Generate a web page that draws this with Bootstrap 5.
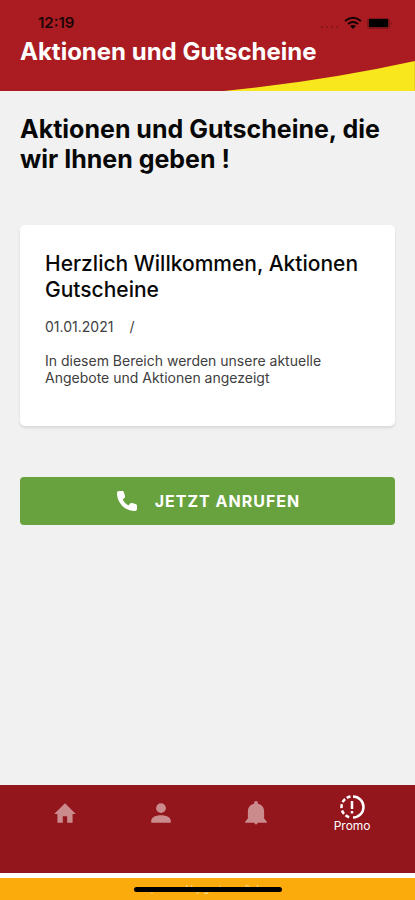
<!DOCTYPE html>
<html lang="de">
<head>
<meta charset="utf-8">
<meta name="viewport" content="width=device-width, initial-scale=1">
<title>Aktionen und Gutscheine</title>
<link href="https://cdn.jsdelivr.net/npm/bootstrap@5.3.0/dist/css/bootstrap.min.css" rel="stylesheet">
<style>
body { font-family: Inter, "Liberation Sans", sans-serif; background: #f1f1f1; color: #080808; }
.app-header { background: #aa1c22; height: 91px; }
.swoosh { right: 0; bottom: 0; width: 46%; height: 30px; }
.status { padding: 14px 20px 0 38px; height: 37px; color: #1c0506; }
.clock { font-size: 15px; line-height: 18px; font-weight: 600; }
.page-title { font-size: 24px; line-height: 30px; font-weight: 700; }
.gutter { padding-left: 20px; padding-right: 20px; }
.lead-title { font-size: 25px; line-height: 30px; font-weight: 700; margin: 23px 0 51px; }
.promo-card { border-radius: 5px; padding: 26px 25px 40px; box-shadow: 0 2px 3px rgba(0,0,0,.1); }
.promo-card h3 { font-size: 21px; line-height: 26px; font-weight: 500; margin-bottom: 15px; }
.meta { font-size: 14px; line-height: 18px; color: #404040; margin-bottom: 16px; }
.copy { font-size: 14px; line-height: 17px; color: #404040; }
.btn-call { --bs-btn-bg: #68a23e; --bs-btn-color: #fff; --bs-btn-hover-bg: #5b9135; --bs-btn-hover-color: #fff; height: 48px; border-radius: 4px; margin-top: 51px; font-size: 16px; font-weight: 700; letter-spacing: 1px; gap: 16px; }
.tabs { background: #92161c; height: 88px; padding: 0 15px 0 17px; }
.tabs a { color: #cb8b8d; height: 56px; font-size: 12px; line-height: 12px; }
.tabs a.active { color: #fff; }
.credit { background: #fbab0b; border-top: 5px solid #fff; height: 27px; padding-top: 5px; font-size: 9px; line-height: 12px; }
.credit a { color: #ffe3a4; }
.home-bar { left: 50%; top: 9px; width: 148px; height: 5px; border-radius: 3px; transform: translateX(-50%); }
</style>
<script src="https://cdn.jsdelivr.net/npm/bootstrap@5.3.0/dist/js/bootstrap.bundle.min.js"></script>
</head>
<body class="d-flex flex-column min-vh-100">
<header class="app-header position-relative">
  <svg class="swoosh position-absolute" viewBox="0 0 190 30" preserveAspectRatio="none" aria-hidden="true"><path d="M0 30Q100 20 190 0V30Z" fill="#f8e71c"/></svg>
  <div class="status d-flex justify-content-between position-relative">
    <span class="clock">12:19</span>
    <svg width="76" height="18" viewBox="0 0 76 18" aria-hidden="true">
      <g fill="#80151a"><circle cx="3" cy="13" r="1"/><circle cx="8" cy="13" r="1"/><circle cx="13" cy="13" r="1"/><circle cx="18" cy="13" r="1"/></g>
      <g fill="none" stroke="#120304" stroke-width="2"><path d="M26 7Q34 .5 42 7M29 10Q34 6 39 10"/></g><path d="M31 12Q34 10 37 12L34 15Z" fill="#120304"/>
      <rect x="48" y="4" width="23" height="11" rx="3" fill="#80151a"/><rect x="50" y="5" width="19" height="8" rx="1" fill="#000"/><path d="M72 7q2 2 0 4z" fill="#80151a"/>
    </svg>
  </div>
  <h1 class="page-title gutter text-white mb-0 position-relative">Aktionen und Gutscheine</h1>
</header>
<main class="gutter flex-grow-1">
  <h2 class="lead-title">Aktionen und Gutscheine, die wir Ihnen geben !</h2>
  <article class="promo-card bg-white">
    <h3>Herzlich Willkommen, Aktionen Gutscheine</h3>
    <div class="meta d-flex gap-3"><time datetime="2021-01-01">01.01.2021</time><span>/</span></div>
    <p class="copy mb-0">In diesem Bereich werden unsere aktuelle Angebote und Aktionen angezeigt</p>
  </article>
  <button type="button" class="btn btn-call w-100 border-0 d-flex align-items-center justify-content-center">
    <svg width="24" height="24" viewBox="0 0 24 24" fill="currentColor" aria-hidden="true"><path d="M4 2h3c1 0 1.700.5 2 1.400l1 3.600c.2.800 0 1.500-.6 2L7.600 10.500c1.400 2.600 3.300 4.500 5.900 5.900L15 14.600c.5-.6 1.200-.8 2-.6l3.600 1c.9.300 1.400 1 1.400 2v3c0 1.200-.8 2-2 2C10 22 2 14 2 4c0-1.200.8-2 2-2Z"/></svg>
    <span>JETZT ANRUFEN</span>
  </button>
</main>
<nav class="tabs row row-cols-4 g-0" aria-label="Hauptnavigation">
  <a href="#home" aria-label="Start" class="d-flex flex-column align-items-center justify-content-center text-decoration-none"><svg width="26" height="26" viewBox="0 0 24 24" fill="currentColor"><path d="M10 21v-6h4v6h5v-8h3L12 3 2 13h3v8z"/></svg></a>
  <a href="#profil" aria-label="Profil" class="d-flex flex-column align-items-center justify-content-center text-decoration-none"><svg width="26" height="26" viewBox="0 0 24 24" fill="currentColor"><circle cx="12" cy="7.500" r="4.500"/><path d="M3 21v-2c0-3 4-5 9-5s9 2 9 5v2z"/></svg></a>
  <a href="#news" aria-label="Mitteilungen" class="d-flex flex-column align-items-center justify-content-center text-decoration-none"><svg width="26" height="26" viewBox="0 0 24 24" fill="currentColor"><path d="M12 1a1.800 1.800 0 0 0-1.800 1.800v.6C6.500 4.200 4.500 7 4.500 10.500V17l-2.500 3v1h8.500a1.500 1.500 0 0 0 3 0H22v-1l-2.500-3v-6.500c0-3.500-2-6.300-5.700-7.100v-.6A1.800 1.800 0 0 0 12 1z"/></svg></a>
  <a href="#promo" aria-current="page" class="active d-flex flex-column align-items-center justify-content-center text-decoration-none"><svg width="26" height="26" viewBox="0 0 26 26" fill="none" stroke="currentColor" stroke-width="2.500"><path d="M14 2.500A10.500 10.500 0 0 1 14 23.500"/><path d="M11.500 2.600A10.500 10.500 0 0 0 2.600 14.500" stroke-dasharray="4 2"/><path d="M3 16.500A10.500 10.500 0 0 0 12 23.500" stroke-dasharray="4 2"/><path d="M13 7v8M13 17v2.500"/></svg><span>Promo</span></a>
</nav>
<footer class="credit position-relative text-center">
  <a href="#credit" class="text-decoration-none">powered by gastro-soft.de</a>
  <div class="home-bar position-absolute bg-black"></div>
</footer>
</body>
</html>
